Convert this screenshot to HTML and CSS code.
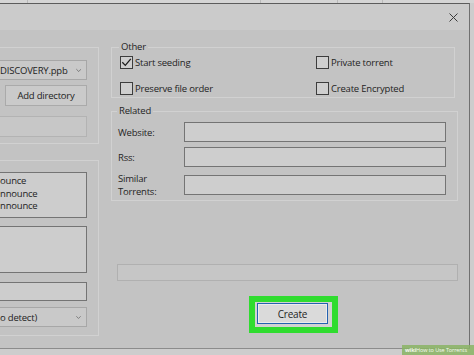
FILE: index.html
```html
<!DOCTYPE html>
<html lang="en">
<head>
  <meta charset="UTF-8" />
  <title>Create Torrent</title>
  <link rel="stylesheet" href="styles.css">
</head>
<body>
  <div class="desktop-strip">
    <span class="strip-cell" style="width:28px"></span>
    <span class="strip-cell" style="width:233px"></span>
    <span class="strip-cell" style="width:77px"></span>
    <span class="strip-cell" style="width:45px"></span>
  </div>

  <div class="dialog">
    <div class="titlebar">
      <svg class="close-icon" width="9" height="9" viewBox="0 0 9 9">
        <path d="M0.5 0.5 L8.5 8.5 M8.5 0.5 L0.5 8.5" stroke="#3a3a3a" stroke-width="1" fill="none" />
      </svg>
    </div>

    <div class="dialog-body">
      <div class="left-col">
        <div class="group group-source">
          <div class="combo combo-file">
            <span class="combo-text">DISCOVERY.ppb</span>
            <svg class="chevron" width="8" height="5" viewBox="0 0 8 5"><path d="M0.5 0.5 L4 4 L7.5 0.5" stroke="#555" fill="none" /></svg>
          </div>
          <div class="btn btn-add">Add directory</div>
          <div class="field field-disabled"></div>
        </div>

        <div class="group group-trackers">
          <div class="field tracker-list">
            <div>ounce</div>
            <div>nnounce</div>
            <div>nnounce</div>
          </div>
          <div class="field web-seeds"></div>
          <div class="field comment"></div>
          <div class="combo combo-piece">
            <span class="combo-text">o detect)</span>
            <svg class="chevron" width="8" height="5" viewBox="0 0 8 5"><path d="M0.5 0.5 L4 4 L7.5 0.5" stroke="#555" fill="none" /></svg>
          </div>
        </div>
      </div>

      <div class="right-col">
        <fieldset class="box box-other">
          <legend>Other</legend>
          <div class="options">
            <label class="check"><span class="checkbox">
              <svg width="11" height="11" viewBox="0 0 11 11"><path d="M1.3 5.3 L4.3 8.4 L9.8 1.8" stroke="#1e1e1e" stroke-width="1.3" fill="none" /></svg>
            </span>Start seeding</label>
            <label class="check"><span class="checkbox"></span>Private torrent</label>
            <label class="check"><span class="checkbox"></span>Preserve file order</label>
            <label class="check"><span class="checkbox"></span>Create Encrypted</label>
          </div>
        </fieldset>

        <fieldset class="box box-related">
          <legend>Related</legend>
          <div class="related-grid">
            <span class="label">Website:</span>
            <div class="field text-input"></div>
            <span class="label">Rss:</span>
            <div class="field text-input"></div>
            <span class="label">Similar<br>Torrents:</span>
            <div class="field text-input"></div>
          </div>
        </fieldset>

        <div class="progress"></div>

        <div class="actions">
          <div class="highlight">
            <button class="btn-create">Create</button>
          </div>
        </div>
      </div>
    </div>
  </div>

  <div class="watermark"><b>wiki</b>How to Use Torrents</div>
</body>
</html>
```

FILE: styles.css
```css
* {
  box-sizing: border-box;
}
html, body {
  margin: 0;
  padding: 0;
}

body {
  position: relative;
  width: 474px;
  height: 355px;
  overflow: hidden;
  background: #cdcdcd;
  font-family: 'Open Sans', 'Noto Sans', sans-serif;
  font-size: 9.5px;
  letter-spacing: -0.2px;
  color: #232323;
}

.desktop-strip {
  display: flex;
  height: 3px;
  background: #d5d5d5;
}

.strip-cell {
  border-right: 1px solid #b9b9b9;
}

.dialog {
  display: flex;
  flex-direction: column;
  width: 470px;
  height: 346px;
  background: #c3c3c3;
  border-top: 1px solid #5c5c5c;
  border-right: 1px solid #707070;
  border-bottom: 1px solid #8c8c8c;
}

.titlebar {
  display: flex;
  justify-content: flex-end;
  align-items: center;
  height: 26px;
  padding-right: 11px;
  background: #cbcbcb;
}

.dialog-body {
  display: flex;
  gap: 12px;
  flex: 1;
}

/* left column, cut off by the screen edge */
.left-col {
  width: 99px;
  padding-top: 17px;
  overflow: hidden;
}

.group {
  border: 1px solid #d1d1d1;
  border-left: none;
  padding-right: 11px;
}

.group-source {
  height: 97px;
  padding-top: 12px;
}

.group-trackers {
  height: 176px;
  margin-top: 16px;
  padding-top: 11px;
}

.combo {
  display: flex;
  align-items: center;
  justify-content: flex-end;
  height: 20px;
  border: 1px solid #a7a7a7;
  border-left: none;
  background: #c9c9c9;
  white-space: nowrap;
  overflow: hidden;
}

.combo-file .combo-text {
  margin-right: 8px;
}

.combo-piece .combo-text {
  margin-right: 39px;
}

.chevron {
  margin-right: 5px;
}

.btn-add {
  display: flex;
  align-items: center;
  justify-content: center;
  height: 21px;
  margin: 5px 0 0 5px;
  border: 1px solid #aaaaaa;
  background: #cacaca;
}

.field {
  border: 1px solid #747474;
  border-left: none;
  background: #cdcdcd;
}

.field-disabled {
  height: 21px;
  margin-top: 10px;
  border-color: #b3b3b3;
  background: #c7c7c7;
}

.tracker-list {
  height: 46px;
  padding-top: 2px;
  line-height: 12.5px;
  white-space: nowrap;
}

.web-seeds {
  height: 47px;
  margin-top: 8px;
}

.comment {
  height: 19px;
  margin-top: 9px;
}

.combo-piece {
  margin-top: 6px;
}

/* right column */
.right-col {
  display: flex;
  flex-direction: column;
  align-items: flex-start;
  padding-top: 11px;
}

.box {
  margin: 0;
  border: 1px solid #d1d1d1;
  min-width: 0;
}

.box legend {
  padding: 0 2px;
  margin-left: -1px;
  line-height: 12px;
}

.box-other {
  width: 344px;
  padding: 2px 8px 2px 8px;
}

.options {
  display: grid;
  grid-template-columns: 196px 1fr;
  row-gap: 12px;
}

.check {
  display: flex;
  align-items: center;
  gap: 2px;
  height: 14px;
}

.checkbox {
  display: flex;
  align-items: center;
  justify-content: center;
  width: 13px;
  height: 13px;
  border: 1px solid #3d3d3d;
  background: #cfcfcf;
}

.box-related {
  width: 347px;
  margin-top: 7px;
  padding: 5px 10px 2px 6px;
}

.related-grid {
  display: grid;
  grid-template-columns: 66px 262px;
  align-items: center;
  row-gap: 5px;
}

.label {
  line-height: 13px;
}

.text-input {
  height: 20px;
  border-left: 1px solid #747474;
  background: #cecece;
}

.progress {
  width: 341px;
  height: 17px;
  margin: 63px 0 0 6px;
  border: 1px solid #b0b0b0;
  background: #c6c6c6;
}

.actions {
  margin: 15px 0 0 138px;
}

.highlight {
  padding: 1px 4px 3px 2px;
  border: 6px solid #2fdc2f;
  background: #d2d2d2;
}

.btn-create {
  display: block;
  width: 71px;
  height: 21px;
  padding: 0;
  border: 1px solid #2462b0;
  box-shadow: inset 0 0 0 1px #ececec;
  background: #dadada;
  font-family: inherit;
  font-size: 10px;
  letter-spacing: -0.2px;
  color: #1d1d1d;
}

.watermark {
  position: absolute;
  right: 0;
  bottom: 0;
  width: 72px;
  height: 10px;
  padding-left: 3px;
  background: rgba(137, 180, 100, 0.85);
  color: #f4f8ef;
  font-size: 5.5px;
  letter-spacing: -0.1px;
  line-height: 10px;
  white-space: nowrap;
}
```
